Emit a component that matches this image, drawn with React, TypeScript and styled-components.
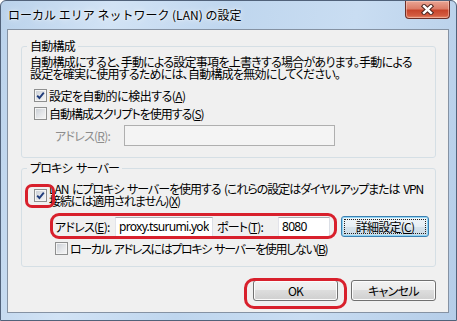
import { ReactNode } from 'react';
import styled, { createGlobalStyle } from 'styled-components';

const GlobalStyle = createGlobalStyle`
  html, body {
    margin: 0;
    padding: 0;
    background: #ffffff;
  }
  body {
    font-family: "Noto Sans CJK JP", "Noto Sans", sans-serif;
    font-size: 12px;
    color: #000;
  }
`;

const Window = styled.div`
  position: relative;
  box-sizing: border-box;
  width: 457px;
  height: 321px;
  border: 1px solid #51627a;
  border-radius: 6px 6px 0 0;
  background: linear-gradient(100deg, #bad2eb 0%, #d2e3f5 22%, #bfd6ee 45%, #c9ddf2 70%, #b5cde8 100%);
  overflow: hidden;
  font-family: "Noto Sans CJK JP", "Noto Sans", sans-serif;
  font-size: 12px;
  font-feature-settings: "palt";
  letter-spacing: -0.75px;
  word-spacing: 2px;
`;

const TitleBar = styled.div`
  height: 28px;
  display: flex;
  align-items: center;
  padding-left: 7px;
`;

const Title = styled.div`
  line-height: 14px;
  white-space: nowrap;
  letter-spacing: normal;
  word-spacing: normal;
  font-feature-settings: normal;
  text-shadow: 0 0 6px rgba(255, 255, 255, 0.95), 0 0 2px rgba(255, 255, 255, 0.9);
`;

const CloseButton = styled.div`
  align-self: flex-start;
  margin: 0 6px 0 auto;
  width: 45px;
  height: 18px;
  box-sizing: border-box;
  border: 1px solid #6c2f27;
  border-top: none;
  border-radius: 0 0 4px 4px;
  background: linear-gradient(#e9a594 0%, #dc7d68 45%, #c7452c 55%, #d35b40 85%, #e68a6b 100%);
  box-shadow: inset 0 0 0 1px rgba(255, 220, 210, 0.45);
  display: flex;
  align-items: center;
  justify-content: center;
`;

const Client = styled.div`
  box-sizing: border-box;
  height: 284px;
  margin: 0 7px 0 6px;
  border: 1px solid #8592a3;
  background: #f0f0f0;
  padding: 9px 12px 0 13px;
  display: flex;
  flex-direction: column;
`;

const Group = styled.fieldset<{ $top: number; $bottom: number }>`
  margin: ${(p) => p.$top}px 0 0;
  padding: 0 0 ${(p) => p.$bottom}px;
  min-width: 0;
  border: 1px solid #d5dfe5;
  border-radius: 3px;
`;

const Legend = styled.legend`
  margin-left: 5px;
  padding: 0 3px;
  line-height: 14px;
`;

const Description = styled.p`
  margin: 3px 0 0 8px;
  line-height: 12px;
  white-space: nowrap;
`;

const Row = styled.div<{ $top: number; $left: number }>`
  display: flex;
  align-items: center;
  margin: ${(p) => p.$top}px 0 0 ${(p) => p.$left}px;
  white-space: nowrap;
`;

const CheckLabel = styled.span<{ $spacing?: number }>`
  margin-left: 2px;
  line-height: 12px;
  letter-spacing: ${(p) => p.$spacing ?? -0.75}px;
`;

const Box = styled.span`
  flex: none;
  box-sizing: border-box;
  width: 13px;
  height: 13px;
  border: 1px solid #8e8f8f;
  box-shadow: inset 0 0 0 1px #f4f4f4;
  background: linear-gradient(135deg, #c7ccd3 0%, #e4e6e9 55%, #f7f7f7 100%);
  display: flex;
  align-items: center;
  justify-content: center;
`;

const FieldLabel = styled.span<{ $width: number; $gap?: number; $disabled?: boolean }>`
  width: ${(p) => p.$width}px;
  margin-left: ${(p) => p.$gap ?? 0}px;
  flex: none;
  color: ${(p) => (p.$disabled ? '#8d8d8d' : '#000')};
`;

const TextBox = styled.input<{ $width: number; $height: number }>`
  box-sizing: border-box;
  width: ${(p) => p.$width}px;
  height: ${(p) => p.$height}px;
  margin: 0;
  padding: 0 3px;
  border: 1px solid;
  border-color: #abadb3 #dbdfe6 #e3e9ef #e2e3ea;
  background: #fff;
  font-family: "Noto Sans", "Noto Sans CJK JP", sans-serif;
  font-size: 12px;
  letter-spacing: -0.7px;
  color: #000;
  outline: none;

  &:disabled {
    border-color: #afafaf;
    background: #f4f4f4;
  }
`;

const Button = styled.div<{ $width: number; $left?: number; $focused?: boolean }>`
  box-sizing: border-box;
  width: ${(p) => p.$width}px;
  height: 21px;
  margin-left: ${(p) => p.$left ?? 0}px;
  border: 1px solid ${(p) => (p.$focused ? '#3c7fb1' : '#707070')};
  border-radius: 3px;
  background: ${(p) =>
    p.$focused
      ? 'linear-gradient(#f1f6fa 0%, #e6eef4 50%, #d7e3ec 50%, #ccdbe6 100%)'
      : 'linear-gradient(#f2f2f2 0%, #ebebeb 50%, #dddddd 50%, #cfcfcf 100%)'};
  box-shadow: inset 0 0 0 1px ${(p) => (p.$focused ? '#8fd6f6' : '#fcfcfc')};
  display: flex;
  align-items: center;
  justify-content: center;
  padding: 2px;
  white-space: nowrap;
`;

const FocusFace = styled.span`
  flex: 1;
  align-self: stretch;
  display: flex;
  align-items: center;
  justify-content: center;
  border: 1px dotted #222;
`;

const Key = styled.span`
  text-decoration: underline;
  text-underline-offset: 1px;
`;

const ButtonBar = styled.div`
  display: flex;
  justify-content: flex-end;
  gap: 13px;
  margin-top: 13px;
`;

const Highlight = styled.div<{ $x: number; $y: number; $w: number; $h: number; $r: number }>`
  position: absolute;
  left: ${(p) => p.$x}px;
  top: ${(p) => p.$y}px;
  width: ${(p) => p.$w}px;
  height: ${(p) => p.$h}px;
  box-sizing: border-box;
  border: 3px solid #d8202c;
  border-radius: ${(p) => p.$r}px;
  pointer-events: none;
`;

const CheckBox = ({
  checked,
  spacing,
  children,
}: {
  checked?: boolean;
  spacing?: number;
  children?: ReactNode;
}) => (
  <>
    <Box role="checkbox" aria-checked={!!checked}>
      {checked && (
        <svg width="9" height="9" viewBox="0 0 9 9">
          <path d="M1.2 4.6 L3.4 7 L7.8 1.6" fill="none" stroke="#1f3c7c" strokeWidth="1.9" />
        </svg>
      )}
    </Box>
    <CheckLabel $spacing={spacing}>{children}</CheckLabel>
  </>
);

const CloseGlyph = () => (
  <svg width="13" height="11" viewBox="0 0 13 11">
    <path d="M3 2.2 L10 8.8 M10 2.2 L3 8.8" stroke="#4e2620" strokeWidth="4.4" strokeLinecap="square" />
    <path d="M3 2.2 L10 8.8 M10 2.2 L3 8.8" stroke="#ffffff" strokeWidth="2.4" strokeLinecap="square" />
  </svg>
);

const App = () => {
  return (
    <>
      <GlobalStyle />
      <Window>
        <TitleBar>
          <Title>ローカル エリア ネットワーク (LAN) の設定</Title>
          <CloseButton>
            <CloseGlyph />
          </CloseButton>
        </TitleBar>
        <Client>
          <Group $top={0} $bottom={11}>
            <Legend>自動構成</Legend>
            <Description>
              自動構成にすると、手動による設定事項を上書きする場合があります。手動による
              <br />
              設定を確実に使用するためには、自動構成を無効にしてください。
            </Description>
            <Row $top={9} $left={12}>
              <CheckBox checked spacing={-0.5}>
                設定を自動的に検出する(<Key>A</Key>)
              </CheckBox>
            </Row>
            <Row $top={5} $left={12}>
              <CheckBox spacing={-1}>
                自動構成スクリプトを使用する(<Key>S</Key>)
              </CheckBox>
            </Row>
            <Row $top={5} $left={33}>
              <FieldLabel $width={69} $disabled>
                アドレス(<Key>R</Key>):
              </FieldLabel>
              <TextBox $width={211} $height={21} disabled defaultValue="" />
            </Row>
          </Group>

          <Group $top={3} $bottom={11}>
            <Legend>プロキシ サーバー</Legend>
            <Row $top={8} $left={12}>
              <CheckBox checked spacing={-1.05}>
                LAN にプロキシ サーバーを使用する (これらの設定はダイヤルアップまたは VPN
                <br />
                接続には適用されません)(<Key>X</Key>)
              </CheckBox>
            </Row>
            <Row $top={9} $left={33}>
              <FieldLabel $width={60}>
                アドレス(<Key>E</Key>):
              </FieldLabel>
              <TextBox $width={98} $height={20} readOnly defaultValue="proxy.tsurumi.yokohama" />
              <FieldLabel $width={61} $gap={4}>
                ポート(<Key>T</Key>):
              </FieldLabel>
              <TextBox $width={52} $height={20} readOnly defaultValue="8080" />
              <Button $width={88} $left={11} $focused>
                <FocusFace>
                  詳細設定(<Key>C</Key>)
                </FocusFace>
              </Button>
            </Row>
            <Row $top={5} $left={33}>
              <CheckBox spacing={-1.35}>
                ローカル アドレスにはプロキシ サーバーを使用しない(<Key>B</Key>)
              </CheckBox>
            </Row>
          </Group>

          <ButtonBar>
            <Button $width={85}>OK</Button>
            <Button $width={85}>キャンセル</Button>
          </ButtonBar>
        </Client>

        <Highlight $x={24} $y={183} $w={30} $h={24} $r={7} />
        <Highlight $x={49} $y={212} $w={287} $h={26} $r={9} />
        <Highlight $x={243} $y={277} $w={103} $h={31} $r={10} />
      </Window>
    </>
  );
};

export default App;
